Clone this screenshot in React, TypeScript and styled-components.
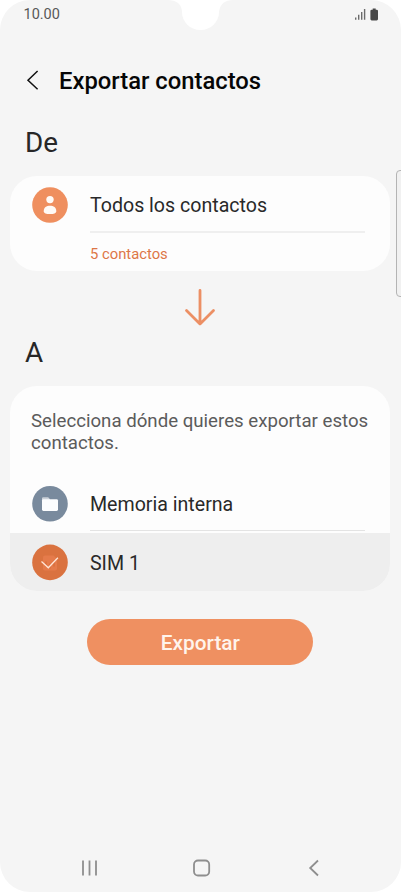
import React from "react";
import styled, { createGlobalStyle } from "styled-components";

const Global = createGlobalStyle`
  * { box-sizing: border-box; }
  html, body { margin: 0; padding: 0; background: #fff; }
  body { font-family: Roboto, "Liberation Sans", sans-serif; overflow: hidden; }
`;

const Screen = styled.main`
  position: relative;
  display: flex;
  flex-direction: column;
  width: 401px;
  height: 892px;
  background: #f5f5f5;
  border-radius: 30px;
  overflow: hidden;
`;

const Notch = styled.svg`
  position: absolute;
  top: 0;
  left: 168px;
`;

const EdgeHandle = styled.div`
  position: absolute;
  top: 170px;
  right: -8px;
  width: 13px;
  height: 127px;
  border: 1px solid #b4b4b4;
  border-radius: 4px;
  background: #f1f1f1;
`;

const StatusBar = styled.header`
  display: flex;
  justify-content: space-between;
  height: 28px;
  padding: 0 22px 0 23.5px;
`;

const Clock = styled.span`
  font-size: 14.5px;
  line-height: 29px;
  color: #585858;
`;

const StatusIcons = styled.svg`
  margin-top: 8px;
`;

const TitleBar = styled.div`
  display: flex;
  align-items: center;
  height: 98px;
  padding: 8px 0 0 26px;
  gap: 19px;
`;

const Title = styled.h1`
  margin: 0;
  font-size: 23.8px;
  line-height: 30px;
  font-weight: 500;
  color: #060606;
`;

const SectionTitle = styled.h2`
  margin: 0;
  height: 50px;
  padding: 1px 0 0 25px;
  font-size: 27.8px;
  line-height: 32px;
  font-weight: 400;
  color: #272727;
`;

const Card = styled.section<{ $height: number }>`
  width: 380px;
  height: ${(p) => p.$height}px;
  flex: none;
  margin-left: 10.4px;
  border-radius: 27px;
  background: #fdfdfd;
  overflow: hidden;
`;

const Row = styled.div<{ $height?: number; $selected?: boolean }>`
  display: flex;
  align-items: center;
  height: ${(p) => p.$height ?? 59}px;
  padding-left: 21.6px;
  gap: 22px;
  background: ${(p) => (p.$selected ? "#eeeeee" : "transparent")};
`;

const ListRow = styled(Row)`
  padding-top: 3px;
`;

const RowLabel = styled.span`
  padding-top: 2px;
  font-size: 19.6px;
  line-height: 26px;
  color: #292929;
`;

const Divider = styled.div<{ $thickness: number; $after?: number }>`
  height: ${(p) => p.$thickness}px;
  margin: 0 25px ${(p) => p.$after ?? 0}px 79.6px;
  background: ${(p) => (p.$thickness > 1 ? "#efefef" : "#e3e3e3")};
`;

const Count = styled.div`
  padding: 11px 0 0 79.6px;
  font-size: 14.8px;
  line-height: 20px;
  color: #dd7647;
`;

const ArrowWrap = styled.div`
  display: flex;
  justify-content: center;
  height: 65px;
  padding: 17px 0.6px 0 0;
`;

const Hint = styled.p`
  margin: 0;
  height: 88px;
  padding: 24px 10px 0 20.6px;
  font-size: 18.66px;
  line-height: 22px;
  color: #5b5b5b;
`;

const ExportButton = styled.button`
  flex: none;
  width: 226px;
  height: 46px;
  margin: 28px 0 0 87.4px;
  padding: 2px 0 0;
  border: 0;
  border-radius: 23px;
  background: #ef9061;
  color: #fff4ec;
  font-family: inherit;
  font-size: 20.8px;
  font-weight: 500;
`;

const NavBar = styled.nav`
  display: flex;
  gap: 94.5px;
  margin-top: auto;
  height: 33px;
  padding-left: 81px;
`;

function PersonIcon() {
  return (
    <svg width="36" height="36" viewBox="0 0 36 36">
      <circle cx="18" cy="18" r="17.8" fill="#ef8f5f" />
      <circle cx="18" cy="12.6" r="3.7" fill="#fffaf6" />
      <path d="M11.7 24.2c0-3.6 2.7-5.4 6.3-5.4s6.3 1.8 6.3 5.4c0 2-2.6 2.9-6.3 2.9s-6.3-.9-6.3-2.9z" fill="#fffaf6" />
    </svg>
  );
}

function FolderIcon() {
  return (
    <svg width="36" height="36" viewBox="0 0 36 36">
      <circle cx="18" cy="17.8" r="17.8" fill="#798a9d" />
      <path d="M10 15.6v-3.2q0-1.2 1.2-1.2h4.6q.8 0 1.2.7l1 1.7v2z" fill="#cbd1d8" />
      <rect x="10" y="13.2" width="16" height="11.7" rx="1.4" fill="#fcfdfe" />
    </svg>
  );
}

function SimSelectedIcon() {
  return (
    <svg width="36" height="36" viewBox="0 0.6 36 36" overflow="visible">
      <circle cx="18" cy="18" r="17.8" fill="#da723f" />
      <path d="M13 11h8.5l3.5 3.5V24q0 2-2 2H13q-2 0-2-2V13q0-2 2-2z" fill="#e57b4b" />
      <path d="M14 17v5M18 19v5M22 17v5" stroke="#d86f3c" strokeWidth="1.5" />
      <path d="M9.5 17.2l6.8 6.2 9.6-10" fill="none" stroke="#ffe5d6" strokeWidth="1.3" />
    </svg>
  );
}

export default function App() {
  return (
    <>
      <Global />
      <Screen>
        <Notch width="65" height="30" viewBox="0 0 65 30">
          <path d="M0 0C8 0 14 4 14 12C14 22 22 30 32.5 30S51 22 51 12C52 4 57 0 65 0z" fill="#fff" />
        </Notch>
        <EdgeHandle />
        <StatusBar>
          <Clock>10.00</Clock>
          <StatusIcons width="25" height="13" viewBox="0 0 25 13">
            <path d="M1.7 9.5v2.3M4.7 6.7v5.1M7.7 4v7.8M10.6 1v10.8" stroke="#6b6b6b" strokeWidth="1.4" />
            <path d="M18.7 .5h3v1.2h1q1.3 0 1.3 1.2v8.2q0 1.3-1.3 1.3h-5q-1.3 0-1.3-1.3V2.9q0-1.2 1.3-1.2h1z" fill="#484848" />
          </StatusIcons>
        </StatusBar>
        <TitleBar>
          <svg width="14" height="22" viewBox="0 0 14 22">
            <path d="M11.6 1L2 10.2l9.6 9" fill="none" stroke="#111" strokeWidth="1.5" />
          </svg>
          <Title>Exportar contactos</Title>
        </TitleBar>
        <SectionTitle>De</SectionTitle>
        <Card $height={95}>
          <ListRow $height={55}>
            <PersonIcon />
            <RowLabel>Todos los contactos</RowLabel>
          </ListRow>
          <Divider $thickness={2} />
          <Count>5 contactos</Count>
        </Card>
        <ArrowWrap>
          <svg width="32" height="38" viewBox="0 0 32 38">
            <path d="M16 2.4v33.5M2.5 22.4L16 35.9l13.5-13.5" fill="none" stroke="#ec8f64" strokeWidth="2.8" strokeLinecap="round" strokeLinejoin="round" />
          </svg>
        </ArrowWrap>
        <SectionTitle>A</SectionTitle>
        <Card $height={205}>
          <Hint>Selecciona dónde quieres exportar estos contactos.</Hint>
          <ListRow $height={56}>
            <FolderIcon />
            <RowLabel>Memoria interna</RowLabel>
          </ListRow>
          <Divider $thickness={1} $after={2} />
          <Row $selected>
            <SimSelectedIcon />
            <RowLabel>SIM 1</RowLabel>
          </Row>
        </Card>
        <ExportButton>Exportar</ExportButton>
        <NavBar>
          <svg width="17" height="18" viewBox="0 0 17 18">
            <path d="M2 1.5v15M8.5 1.5v15M15 1.5v15" stroke="#8e8e8e" strokeWidth="1.8" />
          </svg>
          <svg width="18" height="18" viewBox="0 0 18 18">
            <rect x="1" y="1.5" width="15.2" height="15" rx="4" fill="none" stroke="#8e8e8e" strokeWidth="1.8" />
          </svg>
          <svg width="18" height="18" viewBox="0 0 18 18">
            <path d="M13 1.5L5.2 9l7.8 7.5" fill="none" stroke="#8e8e8e" strokeWidth="1.8" />
          </svg>
        </NavBar>
      </Screen>
    </>
  );
}
